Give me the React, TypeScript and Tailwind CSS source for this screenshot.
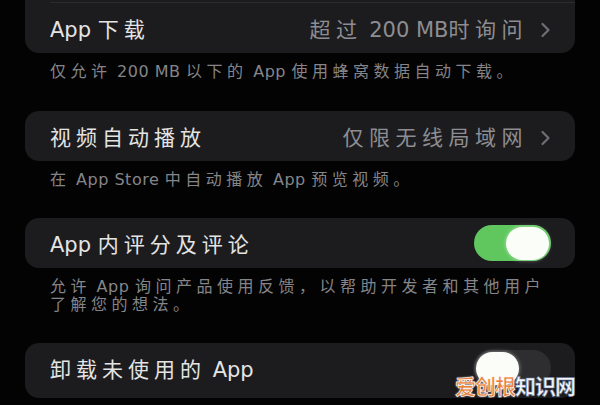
import React from 'react';

const CJK = /([\u3000-\u303f\u4e00-\u9fff\uff00-\uffef]+)/;

// CJK runs get extra tracking, latin runs stay tight (the shot is stretched wide)
const Txt: React.FC<{ text: string; cjk: string }> = ({ text, cjk }) => (
  <>
    {text.split(CJK).map((part, i) =>
      CJK.test(part) ? (
        <span key={i} className={cjk}>
          {part}
        </span>
      ) : (
        <span key={i}>{part}</span>
      )
    )}
  </>
);

const Chevron: React.FC = () => (
  <svg width="11" height="16" viewBox="0 0 11 16" fill="none" className="shrink-0">
    <path d="M2.5 2 L8.5 8 L2.5 14" stroke="#6e6e73" strokeWidth="2.2" strokeLinecap="round" strokeLinejoin="round" />
  </svg>
);

const Toggle: React.FC<{ on: boolean }> = ({ on }) => (
  <div
    className={`flex h-[36px] w-[77px] shrink-0 items-center rounded-full px-[2px] ${
      on ? 'justify-end bg-[#5fc75d]' : 'justify-start bg-[#2e2e31]'
    }`}
  >
    <div className="h-[33px] w-[43px] rounded-full bg-[#fbfdf8] shadow-[0_0_4px_rgba(255,255,255,0.5)]" />
  </div>
);

interface RowProps {
  label: string;
  value?: string;
  toggle?: boolean;
}

const Row: React.FC<RowProps> = ({ label, value, toggle }) => (
  <div className="flex h-[50px] items-center justify-between pl-[25px] pr-[24px]">
    <span className="whitespace-nowrap pt-[5px] text-[21px] text-[#e4e4e4]">
      <Txt text={label} cjk="tracking-[5px]" />
    </span>
    {value !== undefined && (
      <div className="flex items-center gap-[12px] pt-[3px]">
        <span className="whitespace-nowrap pt-[2px] text-[21px] text-[#8d8d92]">
          <Txt text={value} cjk="tracking-[5.5px]" />
        </span>
        <Chevron />
      </div>
    )}
    {toggle !== undefined && <Toggle on={toggle} />}
  </div>
);

const Footer: React.FC<{ lines: string[] }> = ({ lines }) => (
  <p className="mt-[10px] pl-[25px] text-[16px] leading-[18px] tracking-[0.5px] text-[#858589]">
    {lines.map((l, i) => (
      <span key={i} className="block whitespace-nowrap">
        <Txt text={l} cjk="tracking-[4.5px]" />
      </span>
    ))}
  </p>
);

export default function App() {
  return (
    <div
      className="relative h-[405px] w-[600px] overflow-hidden bg-[#030303] px-[25px]"
      style={{ fontFamily: '"DejaVu Sans", "Noto Sans CJK SC", sans-serif' }}
    >
      {/* card cut off at the top */}
      <div className="-mt-[48px] overflow-hidden rounded-[14px] bg-[#1c1c1e]">
        <div className="h-[50px]" />
        <div className="ml-[25px] h-px bg-[#2c2c2e]" />
        <Row label="App 下载" value="超过 200 MB时询问" />
      </div>
      <Footer lines={['仅允许 200 MB 以下的 App 使用蜂窝数据自动下载。']} />

      <div className="mt-[30px] rounded-[14px] bg-[#1c1c1e]">
        <Row label="视频自动播放" value="仅限无线局域网" />
      </div>
      <Footer lines={['在 App Store 中自动播放 App 预览视频。']} />

      <div className="mt-[29px] rounded-[14px] bg-[#1c1c1e]">
        <Row label="App 内评分及评论" toggle={true} />
      </div>
      <Footer lines={['允许 App 询问产品使用反馈，以帮助开发者和其他用户', '了解您的想法。']} />

      <div className="mt-[29px] rounded-[14px] bg-[#1c1c1e]">
        <div className="h-[55px]">
          <Row label="卸载未使用的 App" toggle={false} />
        </div>
      </div>

      {/* watermark */}
      <div
        className="absolute right-[25px] top-[375px] text-[21px] font-bold leading-none tracking-[-1px]"
        style={{ fontFamily: '"Noto Sans CJK SC", sans-serif' }}
      >
        <span className="text-[#e9803b] [-webkit-text-stroke:0.6px_#fff] [text-shadow:0_0_2px_#fff]">爱创根</span>
        <span className="text-[#f4f6fa] [-webkit-text-stroke:0.6px_#6b7da0]">知识网</span>
      </div>
    </div>
  );
}
